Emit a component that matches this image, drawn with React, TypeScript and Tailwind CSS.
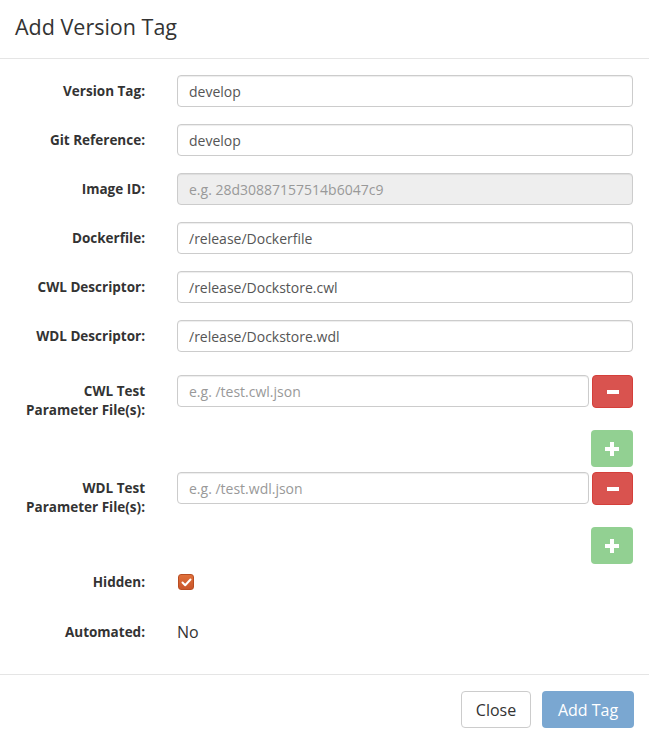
const font = { fontFamily: '"Open Sans", "Liberation Sans", sans-serif' };

function Label({ children }: { children: React.ReactNode }) {
  return (
    <div className="w-[130px] shrink-0 text-right text-[13.5px] font-bold leading-[19px] text-[#333] pt-[7px]">
      {children}
    </div>
  );
}

function TextInput({ value, placeholder, disabled }: { value?: string; placeholder?: string; disabled?: boolean }) {
  return (
    <div
      className={`flex-1 h-[32px] rounded-[4px] border border-[#ccc] px-[11px] flex items-center text-[14px] shadow-[inset_0_1px_1px_rgba(0,0,0,0.075)] ${
        disabled ? 'bg-[#eee]' : 'bg-white'
      }`}
    >
      {value ? <span className="text-[#555]">{value}</span> : <span className="text-[#999]">{placeholder}</span>}
    </div>
  );
}

function Row({ label, children }: { label: React.ReactNode; children: React.ReactNode }) {
  return (
    <div className="flex">
      <Label>{label}</Label>
      <div className="flex-1 ml-[32px]">{children}</div>
    </div>
  );
}

function TestFileRow({ label, placeholder }: { label: React.ReactNode; placeholder: string }) {
  return (
    <div className="flex">
      <Label>{label}</Label>
      <div className="flex-1 ml-[32px]">
        <div className="flex gap-[3px]">
          <TextInput placeholder={placeholder} />
          <div className="w-[41px] h-[33px] rounded-[4px] bg-[#d9534f] border border-[#d43f3a] flex items-center justify-center">
            <svg width="12" height="4" viewBox="0 0 12 4">
              <rect x="0" y="0" width="12" height="4" fill="white" />
            </svg>
          </div>
        </div>
        <div className="flex justify-end mt-[22px]">
          <div className="w-[42px] h-[37px] rounded-[4px] bg-[#92d092] flex items-center justify-center">
            <svg width="14" height="14" viewBox="0 0 14 14">
              <rect x="5" y="0" width="4" height="14" fill="white" />
              <rect x="0" y="5" width="14" height="4" fill="white" />
            </svg>
          </div>
        </div>
      </div>
    </div>
  );
}

export default function App() {
  return (
    <div className="w-[649px] h-[741px] bg-white text-[#333] overflow-hidden" style={font}>
      <div className="h-[59px] border-b border-[#e5e5e5] px-[15px] flex items-center">
        <h4 className="text-[21.5px] text-[#333] leading-none pb-[4px]">Add Version Tag</h4>
      </div>

      <div className="pl-[15px] pr-[16px] pt-[16px]">
        <div className="flex flex-col gap-[17px]">
          <Row label="Version Tag:"><TextInput value="develop" /></Row>
          <Row label="Git Reference:"><TextInput value="develop" /></Row>
          <Row label="Image ID:"><TextInput placeholder="e.g. 28d30887157514b6047c9" disabled /></Row>
          <Row label="Dockerfile:"><TextInput value="/release/Dockerfile" /></Row>
          <Row label="CWL Descriptor:"><TextInput value="/release/Dockstore.cwl" /></Row>
          <Row label="WDL Descriptor:"><TextInput value="/release/Dockstore.wdl" /></Row>
        </div>

        <div className="mt-[23px]">
          <TestFileRow label={<>CWL Test<br />Parameter File(s):</>} placeholder="e.g. /test.cwl.json" />
        </div>
        <div className="mt-[5px]">
          <TestFileRow label={<>WDL Test<br />Parameter File(s):</>} placeholder="e.g. /test.wdl.json" />
        </div>

        <div className="flex mt-[10px] items-center h-[16px]">
          <div className="w-[130px] text-right text-[13.5px] font-bold text-[#333]">Hidden:</div>
          <div className="ml-[33px] w-[16px] h-[16px] rounded-[3px] bg-gradient-to-b from-[#e0703a] to-[#c9552a] border border-[#b94d22] flex items-center justify-center">
            <svg width="11" height="9" viewBox="0 0 11 9" fill="none">
              <path d="M1.5 4.5 L4.2 7.2 L9.5 1.5" stroke="white" strokeWidth="2" strokeLinecap="round" strokeLinejoin="round" />
            </svg>
          </div>
        </div>

        <div className="flex mt-[32px] items-center h-[20px]">
          <div className="w-[130px] text-right text-[13.5px] font-bold text-[#333]">Automated:</div>
          <div className="ml-[32px] text-[16px] text-[#333]">No</div>
        </div>
      </div>

      <div className="mt-[32px] border-t border-[#e5e5e5] px-[15px] pt-[16px] flex justify-end gap-[11px]">
        <div className="h-[37px] w-[70px] rounded-[4px] border border-[#ccc] bg-white text-[#333] text-[16px] flex items-center justify-center">
          Close
        </div>
        <div className="h-[37px] w-[92px] rounded-[4px] bg-[#7aa7d1] text-white text-[16px] flex items-center justify-center">
          Add Tag
        </div>
      </div>
    </div>
  );
}
